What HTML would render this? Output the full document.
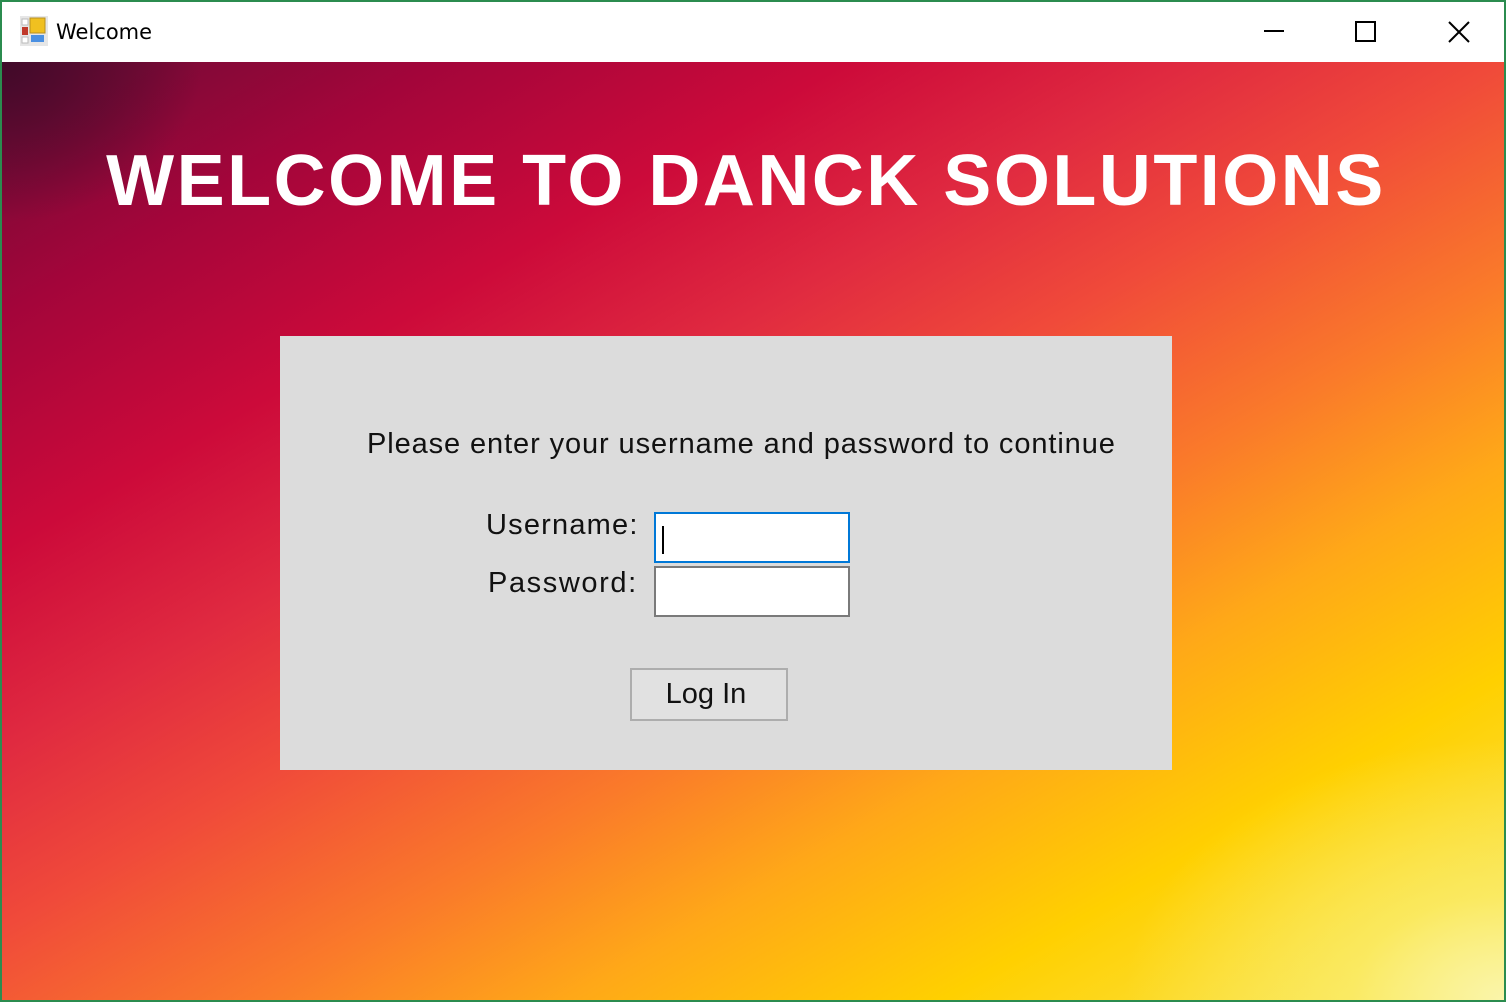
<!DOCTYPE html>
<html><head><meta charset="utf-8"><style>
*{margin:0;padding:0;box-sizing:border-box}
body{width:1506px;height:1002px;overflow:hidden;background:#fff;font-family:"Liberation Sans",Arial,sans-serif;position:relative}
.frame{position:absolute;left:0;top:0;width:1506px;height:1002px;border:2px solid #2b8c4f}
.title{position:absolute;left:2px;top:2px;width:1502px;height:60px;background:#fff}
.title .t{position:absolute;left:54px;top:18px;color:#000;font-family:"DejaVu Sans","Liberation Sans",sans-serif;font-size:21px}
.bg{position:absolute;left:2px;top:62px;width:1502px;height:938px;
background:
radial-gradient(ellipse 200px 160px at 0% 0%, rgba(60,10,40,0.9), rgba(60,10,40,0) 100%),
radial-gradient(ellipse 380px 260px at 100% 100%, rgba(250,245,170,1), rgba(250,240,120,0.6) 40%, rgba(250,220,0,0) 100%),
linear-gradient(150deg,#6a0c35 0%,#a3053a 14%,#cc0a3a 27%,#e02a40 38%,#f04a3a 48%,#fa7a2a 60%,#ffa818 70%,#ffd000 82%,#f8e860 100%);}
h1{position:absolute;left:0;width:1506px;top:140px;text-align:center;color:#fff;font-size:72px;font-weight:bold;letter-spacing:2.5px;padding-right:14px}
.panel{position:absolute;left:280px;top:336px;width:892px;height:434px;background:#dcdcdc}
.msg{position:absolute;left:367px;top:428px;font-size:29px;color:#111;letter-spacing:0.9px}
.lbl{position:absolute;font-size:29px;color:#111;letter-spacing:1.2px}
.in{position:absolute;left:654px;width:196px;height:51px;background:#fff;border:2px solid #7a7a7a}
.in.f{border-color:#0078d7}
.caret{position:absolute;left:6px;top:12px;width:2px;height:28px;background:#000}
.btn{position:absolute;left:630px;top:668px;width:158px;height:53px;background:#e1e1e1;border:2px solid #adadad;font-size:29px;text-align:center;line-height:49px;color:#111;padding-right:6px}
</style></head><body>
<div class="frame"></div>
<div class="title">
<svg style="position:absolute;left:18px;top:14px" width="28" height="30" viewBox="0 0 28 30">
<rect x="0" y="0" width="28" height="30" fill="#e6e6e6"/>
<rect x="2" y="3" width="6" height="6" fill="#fff" stroke="#bbb"/>
<rect x="2" y="11" width="6" height="8" fill="#c0392b"/>
<rect x="10" y="2" width="15" height="15" fill="#f0c020" stroke="#b89020"/>
<rect x="11" y="19" width="13" height="7" fill="#4a90e2"/>
<rect x="2" y="21" width="6" height="6" fill="#fff" stroke="#bbb"/>
</svg>
<div class="t">Welcome</div>
<div style="position:absolute;left:1262px;top:28px;width:20px;height:2px;background:#000"></div>
<div style="position:absolute;left:1353px;top:19px;width:21px;height:21px;border:2px solid #000"></div>
<svg style="position:absolute;left:1445px;top:18px" width="24" height="24"><path d="M2 2L22 22M22 2L2 22" stroke="#000" stroke-width="2"/></svg>
</div>
<div class="bg"></div>
<h1>WELCOME TO DANCK SOLUTIONS</h1>
<div class="panel"></div>
<div class="msg">Please enter your username and password to continue</div>
<div class="lbl" style="left:486px;top:509px">Username:</div>
<div class="lbl" style="left:488px;top:567px;letter-spacing:1.6px">Password:</div>
<div class="in f" style="top:512px"><div class="caret"></div></div>
<div class="in" style="top:566px"></div>
<div class="btn">Log In</div>
</body></html>
